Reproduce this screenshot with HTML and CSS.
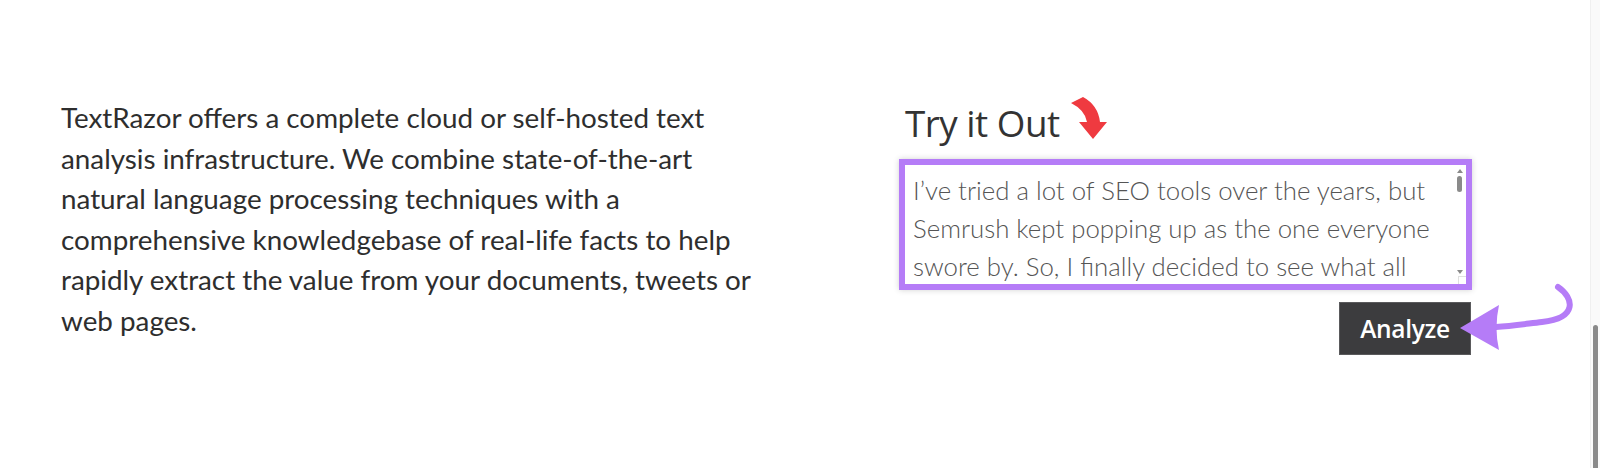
FILE: index.html
```html
<!DOCTYPE html>
<html lang="en">
<head>
<meta charset="utf-8">
<title>TextRazor</title>
<link rel="stylesheet" href="styles.css">
</head>
<body>
<main class="section">
  <div class="intro">
    <p class="lead">TextRazor offers a complete cloud or self-hosted text<br>analysis infrastructure. We combine state-of-the-art<br>natural language processing techniques with a<br>comprehensive knowledgebase of real-life facts to help<br>rapidly extract the value from your documents, tweets or<br>web pages.</p>
  </div>
  <div class="demo">
    <h2 class="demo-title">Try it Out</h2>
    <div class="field">
      <div class="field-text">I’ve tried a lot of SEO tools over the years, but<br>Semrush kept popping up as the one everyone<br>swore by. So, I finally decided to see what all</div>
      <div class="field-scroll">
        <span class="sb-up"></span>
        <span class="sb-thumb"></span>
        <span class="sb-down"></span>
      </div>
      <span class="field-grip"></span>
    </div>
    <div class="actions">
      <button class="btn" type="button">Analyze</button>
    </div>
  </div>
</main>

<svg class="annot" width="1600" height="468" viewBox="0 0 1600 468" aria-hidden="true">
  <path d="M1071,103 L1083,97 Q1098,105 1100,122 L1107,122 L1093,139 L1079,122 L1087,122 Q1085,110 1071,103 Z" fill="#ef3a40"/>
  <path d="M1558,287 C1574,298 1578,318 1542,322 C1525,324 1512,326 1496,327" fill="none" stroke="#b57cf7" stroke-width="6" stroke-linecap="round"/>
  <path d="M1460,328 L1499,305 Q1494,328 1499,350 Z" fill="#b57cf7"/>
</svg>

<div class="page-scroll"><span class="page-thumb"></span></div>
</body>
</html>
```
FILE: styles.css
```css
html, body {
  margin: 0;
  padding: 0;
  background: #ffffff;
}
body {
  width: 1600px;
  height: 468px;
  overflow: hidden;
  position: relative;
  font-family: "Lato", "Open Sans", sans-serif;
}
.section {
  display: flex;
  padding: 96px 0 0 61px;
}
.intro {
  width: 838px;
}
.lead {
  margin: 2px 0 0;
  font-size: 27.8px;
  line-height: 40.6px;
  color: #2e2e2e;
}
.demo {
  width: 573px;
  display: flex;
  flex-direction: column;
}
.demo-title {
  margin: -2px 0 2px 6px;
  font-family: "Open Sans", sans-serif;
  font-weight: 400;
  font-size: 36.8px;
  line-height: 58px;
  color: #333;
  letter-spacing: -0.5px;
}
.field {
  position: relative;
  height: 131px;
  box-sizing: border-box;
  border: 6px solid #b57cf7;
  background: #fff;
  box-shadow: 0 0 6px rgba(0,0,0,0.18);
  overflow: hidden;
  margin-top: 5px;
}
.field-text {
  padding: 6px 24px 0 8px;
  font-family: "Lato", sans-serif;
  font-weight: 300;
  font-size: 25.8px;
  line-height: 38.2px;
  color: #555;
  white-space: nowrap;
}
.field-scroll {
  position: absolute;
  top: 2px;
  right: 1px;
  width: 9px;
  bottom: 10px;
}
.sb-up, .sb-down {
  position: absolute;
  left: 1px;
  width: 0;
  height: 0;
  border-left: 3px solid transparent;
  border-right: 3px solid transparent;
}
.sb-up {
  top: 2px;
  border-bottom: 4px solid #8a8a8a;
}
.sb-down {
  bottom: 0;
  border-top: 4px solid #8a8a8a;
}
.sb-thumb {
  position: absolute;
  top: 9px;
  left: 1px;
  width: 5px;
  height: 16px;
  border-radius: 3px;
  background: #8a8a8a;
}
.field-grip {
  position: absolute;
  right: 0;
  bottom: 0;
  width: 8px;
  height: 8px;
  border-left: 1px solid #e0e0e0;
  border-top: 1px solid #e0e0e0;
  box-sizing: border-box;
}
.actions {
  display: flex;
  justify-content: flex-end;
  margin-top: 12px;
}
.btn {
  width: 132px;
  height: 53px;
  background: #3c3c3e;
  color: #fff;
  border: 1px solid #5a5a5c;
  font-family: "Open Sans", sans-serif;
  font-weight: 600;
  font-size: 24.5px;
  letter-spacing: -0.3px;
  padding: 0;
  margin-right: 1px;
}
.annot {
  position: absolute;
  left: 0;
  top: 0;
  pointer-events: none;
}
.page-scroll {
  position: absolute;
  top: 0;
  right: 0;
  width: 9px;
  height: 468px;
  background: #fafafa;
  border-left: 1px solid #f0f0f0;
}
.page-thumb {
  position: absolute;
  left: 2px;
  top: 325px;
  width: 5px;
  height: 150px;
  border-radius: 3px;
  background: #8a8a8a;
}
```
